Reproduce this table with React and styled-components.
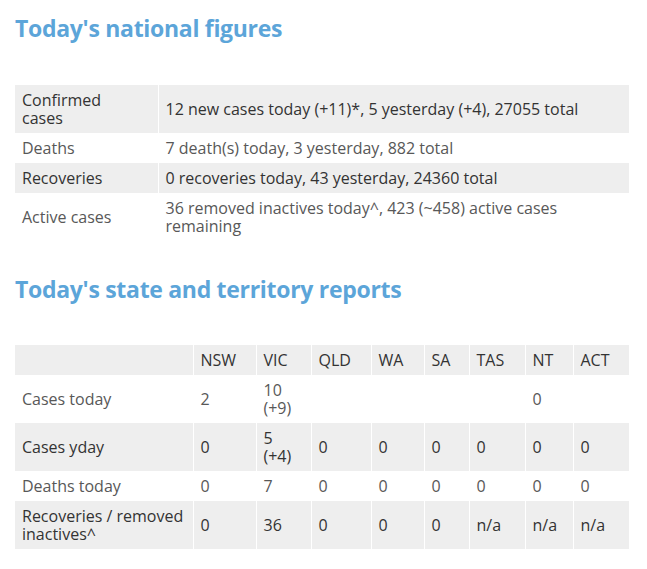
import React from "react";
import styled, { createGlobalStyle } from "styled-components";

const Global = createGlobalStyle`
  html, body { margin: 0; padding: 0; background: #ffffff; }
  body { font-family: "Open Sans", "Noto Sans", sans-serif; }
`;

const Page = styled.div`
  padding: 12px 18px 20px 15px;
  width: 614px;
`;

const Heading = styled.h2`
  margin: 0;
  font-family: "Open Sans", "Noto Sans", sans-serif;
  font-weight: 700;
  font-size: 23px;
  line-height: 32px;
  color: #5ca5d9;
  letter-spacing: -0.3px;
`;

const Table = styled.table`
  width: 614px;
  border-collapse: collapse;
  table-layout: fixed;
  margin-top: ${(p) => p.$top}px;
  margin-bottom: ${(p) => p.$bottom || 0}px;
  font-size: 16px;
  line-height: 18px;
`;

const Row = styled.tr`
  background: ${(p) => (p.$shaded ? "#eeeeee" : "#ffffff")};
  color: ${(p) => (p.$shaded ? "#333333" : "#585858")};
`;

const Cell = styled.td`
  padding: 6px ${(p) => (p.$label ? 14 : 7)}px 6px 7px;
  vertical-align: middle;
  text-align: left;
  border-right: 1px solid #ffffff;
  font-weight: 400;
  &:last-child { border-right: none; }
`;

const national = [
  ["Confirmed cases", "12 new cases today (+11)*, 5 yesterday (+4), 27055 total"],
  ["Deaths", "7 death(s) today, 3 yesterday, 882 total"],
  ["Recoveries", "0 recoveries today, 43 yesterday, 24360 total"],
  ["Active cases", "36 removed inactives today^, 423 (~458) active cases remaining"],
];

const states = ["NSW", "VIC", "QLD", "WA", "SA", "TAS", "NT", "ACT"];
const widths = [178, 63, 55, 60, 53, 45, 56, 48, 56];

const reports = [
  ["Cases today", ["2", "10 (+9)", "", "", "", "", "0", ""]],
  ["Cases yday", ["0", "5 (+4)", "0", "0", "0", "0", "0", "0"]],
  ["Deaths today", ["0", "7", "0", "0", "0", "0", "0", "0"]],
  ["Recoveries / removed inactives^", ["0", "36", "0", "0", "0", "n/a", "n/a", "n/a"]],
];

export default function App() {
  return (
    <>
      <Global />
      <Page>
        <Heading>Today's national figures</Heading>
        <Table $top={41} $bottom={32}>
          <colgroup>
            <col style={{ width: 143 }} />
            <col style={{ width: 471 }} />
          </colgroup>
          <tbody>
            {national.map(([label, value], i) => (
              <Row key={label} $shaded={i % 2 === 0}>
                <Cell $label>{label}</Cell>
                <Cell>{value}</Cell>
              </Row>
            ))}
          </tbody>
        </Table>
        <Heading>Today's state and territory reports</Heading>
        <Table $top={40}>
          <colgroup>
            {widths.map((w, i) => (
              <col key={i} style={{ width: w }} />
            ))}
          </colgroup>
          <tbody>
            <Row $shaded>
              <Cell />
              {states.map((s) => (
                <Cell key={s}>{s}</Cell>
              ))}
            </Row>
            {reports.map(([label, vals], i) => (
              <Row key={label} $shaded={i % 2 === 1}>
                <Cell>{label}</Cell>
                {vals.map((v, j) => (
                  <Cell key={j}>{v}</Cell>
                ))}
              </Row>
            ))}
          </tbody>
        </Table>
      </Page>
    </>
  );
}
